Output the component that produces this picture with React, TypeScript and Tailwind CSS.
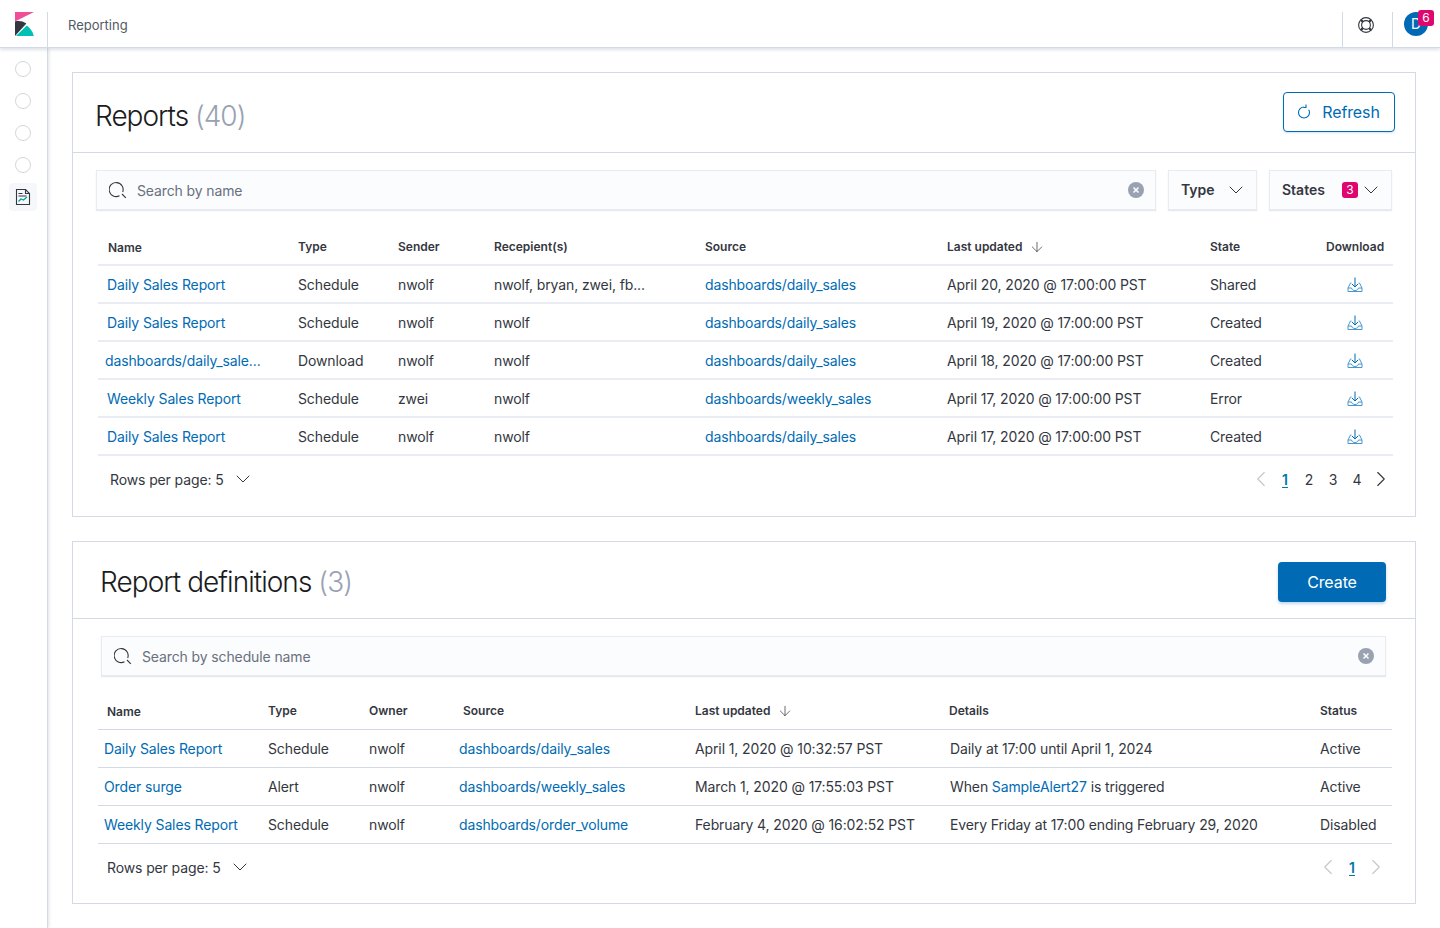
import { ChevronDown, ChevronLeft, ChevronRight, ArrowDown } from "lucide-react";
import type { ReactNode } from "react";

const link = "text-[#006bb4]";
const text = "text-[#343741]";

const reports = [
  ["Daily Sales Report", "Schedule", "nwolf", "nwolf, bryan, zwei, fb...", "dashboards/daily_sales", "April 20, 2020 @ 17:00:00 PST", "Shared"],
  ["Daily Sales Report", "Schedule", "nwolf", "nwolf", "dashboards/daily_sales", "April 19, 2020 @ 17:00:00 PST", "Created"],
  ["dashboards/daily_sale...", "Download", "nwolf", "nwolf", "dashboards/daily_sales", "April 18, 2020 @ 17:00:00 PST", "Created"],
  ["Weekly Sales Report", "Schedule", "zwei", "nwolf", "dashboards/weekly_sales", "April 17, 2020 @ 17:00:00 PST", "Error"],
  ["Daily Sales Report", "Schedule", "nwolf", "nwolf", "dashboards/daily_sales", "April 17, 2020 @ 17:00:00 PST", "Created"],
];

const definitions = [
  ["Daily Sales Report", "Schedule", "nwolf", "dashboards/daily_sales", "April 1, 2020 @ 10:32:57 PST", "Daily at 17:00 until April 1, 2024", "Active"],
  ["Order surge", "Alert", "nwolf", "dashboards/weekly_sales", "March 1, 2020 @ 17:55:03 PST", "", "Active"],
  ["Weekly Sales Report", "Schedule", "nwolf", "dashboards/order_volume", "February 4, 2020 @ 16:02:52 PST", "Every Friday at 17:00 ending February 29, 2020", "Disabled"],
];

function Logo() {
  return (
    <svg width="19" height="24" viewBox="0 0 19 24">
      <path d="M0 0h19L0 9.500z" fill="#f04e98" />
      <path d="M0 9.500 C4 8.500 8 9.300 11.400 11.500 L0 24z" fill="#343741" />
      <path d="M1 24 L11.800 13.500 C15 15.800 17.800 19.500 18.800 24z" fill="#00bfb3" />
    </svg>
  );
}

function ReportIcon() {
  return (
    <svg width="16" height="16" viewBox="0 0 16 16" fill="none" stroke="#343741" strokeWidth="1.100">
      <path d="M1.500.5h9l4 4v11h-13z" />
      <path d="M10.500.5v4h4" />
      <path d="M3.500 4.500h4M3.500 7h8" />
      <path d="M3.500 12.500l2.500-2.500 2.500 1 3.500-3" stroke="#00a69b" strokeWidth="1.300" />
    </svg>
  );
}

function HelpIcon() {
  return (
    <svg width="16" height="16" viewBox="0 0 16 16" fill="none" stroke="#343741" strokeWidth="1.100">
      <circle cx="8" cy="8" r="7.400" />
      <circle cx="8" cy="8" r="4.400" />
      <path d="M2.800 2.800l2.100 2.100M13.200 2.800l-2.100 2.100M2.800 13.200l2.100-2.100M13.200 13.200l-2.100-2.100" strokeWidth="2.200" />
    </svg>
  );
}

function DownloadIcon() {
  return (
    <svg className="mt-[1px]" width="16" height="16" viewBox="0 0 16 16" fill="none" stroke="#006bb4" strokeWidth="1">
      <path d="M4.500 6H3.500L1 11v3.500h14V11l-2.500-5h-1" stroke="#4a97cc" />
      <path d="M1 11h3.500c.4 1.700 1.700 2.500 3.500 2.500s3.100-.8 3.500-2.500H15" stroke="#4a97cc" />
      <path d="M8 .5V10M5 7l3 3 3-3" />
    </svg>
  );
}

function RefreshIcon() {
  return (
    <svg width="16" height="16" viewBox="0 0 16 16" fill="none" stroke="currentColor" strokeWidth="1.100">
      <path d="M8 3a5.500 5.500 0 1 0 5.500 5.500c0-1-.3-2-.8-2.800" />
      <path d="M10 .5V3.500H7.500" />
    </svg>
  );
}

function SearchIcon() {
  return (
    <svg width="18" height="18" viewBox="0 0 18 18" fill="none" stroke="#343741" strokeWidth="1.100">
      <path d="M13.700 11A7 7 0 1 0 10.500 14.700" />
      <path d="M13 13l3.800 3.800" />
    </svg>
  );
}

function ClearIcon() {
  return (
    <span className="flex h-4 w-4 items-center justify-center rounded-full bg-[#98a2b3]">
      <svg width="8" height="8" viewBox="0 0 8 8" stroke="#fff" strokeWidth="1.500">
        <path d="M1.500 1.500l5 5M6.500 1.500l-5 5" />
      </svg>
    </span>
  );
}

function SearchBox({ placeholder, className }: { placeholder: string; className: string }) {
  return (
    <div className={`flex h-10 items-center bg-[#fbfcfd] border border-[#e8ebf1] shadow-[0_1px_1px_rgba(152,162,179,0.25)] ${className}`}>
      <span className="ml-3 mr-[10px] flex"><SearchIcon /></span>
      <span className="flex-1 text-[14px] tracking-[-0.12px] text-[#69707d]">{placeholder}</span>
      <span className="mr-[11px]"><ClearIcon /></span>
    </div>
  );
}

function FilterButton({ label, badge, className }: { label: string; badge?: string; className: string }) {
  return (
    <div className={`flex h-10 items-center bg-[#fbfcfd] border border-[#e8ebf1] shadow-[0_1px_1px_rgba(152,162,179,0.25)] pl-3 ${className}`}>
      <span className="flex-1 pb-[1px] text-[14px] font-semibold text-[#343741]">{label}</span>
      {badge && (
        <span className="mr-[1px] flex h-4 w-4 items-center justify-center rounded-[3px] bg-[#e0066f] text-[12px] text-white">{badge}</span>
      )}
      <ChevronDown className="mr-[8px] h-6 w-6 text-[#343741]" strokeWidth={1} />
    </div>
  );
}

function Head({ className, children }: { className: string; children: ReactNode }) {
  return <div className={`shrink-0 text-[12px] font-semibold text-[#343741] ${className}`}>{children}</div>;
}

function Cell({ className, children }: { className: string; children: ReactNode }) {
  return <div className={`shrink-0 text-[14px] tracking-[-0.12px] ${className}`}>{children}</div>;
}

function Pager({ pages, nextOff }: { pages: string[]; nextOff?: boolean }) {
  return (
    <div className="flex items-center text-[14px] text-[#343741]">
      <ChevronLeft className="-mr-[1px] h-[26px] w-[26px] text-[#c2c6ce]" strokeWidth={1} />
      {pages.map((p, i) => (
        <span key={p} className={`w-6 text-center ${i === 0 ? "font-semibold text-[#0079a5] underline underline-offset-2" : ""}`}>{p}</span>
      ))}
      <ChevronRight className={`-ml-[1px] h-[26px] w-[26px] ${nextOff ? "text-[#c2c6ce]" : "text-[#343741]"}`} strokeWidth={1} />
    </div>
  );
}

function RowsPerPage() {
  return (
    <div className="flex items-center text-[14px] tracking-[-0.12px] text-[#343741]">
      Rows per page: 5
      <ChevronDown className="ml-[7px] h-6 w-6" strokeWidth={1} />
    </div>
  );
}

export default function App() {
  return (
    <div className="flex h-[928px] flex-col overflow-hidden bg-white font-['Inter',sans-serif]">
      <header className="z-10 flex h-[48px] shrink-0 items-stretch border-b border-[#d3dae6] bg-white shadow-[0_2px_3px_rgba(152,162,179,0.3)]">
        <div className="flex w-[47px] items-center pl-[15px] pt-[1px]"><Logo /></div>
        <div className="mt-3 w-px bg-[#d3dae6]" />
        <div className="flex flex-1 items-center pl-[20px] pt-[5px] text-[13px] text-[#535966]">Reporting</div>
        <div className="mt-3 w-px bg-[#d3dae6]" />
        <div className="flex w-[49px] items-center justify-center pr-[3px] pt-[2px]"><HelpIcon /></div>
        <div className="mt-3 w-px bg-[#d3dae6]" />
        <div className="relative flex w-[47px] items-center pl-[11px]">
          <span className="flex h-6 w-6 items-center justify-center rounded-full bg-[#006bb4] text-[14px] text-white">D</span>
          <span className="absolute left-[25px] top-[10px] flex h-[16px] w-[16px] items-center justify-center rounded-[3px] bg-[#e0066f] text-[12px] text-white">6</span>
        </div>
      </header>
      <div className="flex flex-1">
        <aside className="flex w-[48px] shrink-0 flex-col items-center border-r border-[#d3dae6] pt-[13px] pr-[2px] shadow-[1px_0_3px_rgba(152,162,179,0.3)]">
          {[0, 1, 2, 3].map((i) => (
            <span key={i} className="mb-4 h-4 w-4 rounded-full border border-[#d3d6db]" />
          ))}
          <div className="-mt-[6px] flex h-7 w-7 items-center justify-center rounded-[4px] bg-[#f5f7fa]"><ReportIcon /></div>
        </aside>
        <main className="flex-1 pl-[24px] pr-[24px] pt-[24px]">
          <section className="h-[445px] border border-[#d3dae6]">
            <div className="flex h-[80px] items-start justify-between border-b border-[#d3dae6] pl-[22px] pr-[20px]">
              <h1 className="mt-[25px] text-[28px] leading-[36px] font-light tracking-[-1px] text-[#1a1c21]">
                Reports <span className="text-[#98a2b3]">(40)</span>
              </h1>
              <div className="mt-[19px] flex h-10 w-[112px] items-center justify-center gap-[10px] rounded-[4px] border border-[#006bb4] pr-[2px] text-[16px] tracking-[-0.1px] text-[#006bb4] shadow-[0_1px_2px_rgba(0,107,180,0.2)]">
                <RefreshIcon />
                Refresh
              </div>
            </div>
            <div className="mt-[17px] ml-[23px] flex gap-3 pr-[23px]">
              <SearchBox placeholder="Search by name" className="w-[1060px]" />
              <FilterButton label="Type" className="w-[89px]" />
              <FilterButton label="States" badge="3" className="w-[123px]" />
            </div>
            <div className="ml-[25px] mt-[18px] w-[1295px]">
              <div className="flex h-[38px] items-center border-b-2 border-[#e9edf3] pt-[1px]">
                <Head className="w-[200px] pl-[10px] pt-[2px]">Name</Head>
                <Head className="w-[100px]">Type</Head>
                <Head className="w-[96px]">Sender</Head>
                <Head className="w-[211px]">Recepient(s)</Head>
                <Head className="w-[242px]">Source</Head>
                <Head className="flex w-[263px] items-center gap-[7px]">Last updated <ArrowDown className="h-4 w-4" strokeWidth={1.100} /></Head>
                <Head className="w-[116px]">State</Head>
                <Head>Download</Head>
              </div>
              {reports.map((r, i) => (
                <div key={i} className="flex h-[38px] items-center border-b-2 border-[#e9edf3] text-[#343741]">
                  <Cell className={`w-[200px] ${link} ${r[0].startsWith("dash") ? "pl-[7px]" : "pl-[9px]"}`}>{r[0]}</Cell>
                  <Cell className={`w-[100px] ${text}`}>{r[1]}</Cell>
                  <Cell className={`w-[96px] ${text}`}>{r[2]}</Cell>
                  <Cell className={`w-[211px] ${text}`}>{r[3]}</Cell>
                  <Cell className={`w-[242px] ${link}`}>{r[4]}</Cell>
                  <Cell className={`w-[263px] ${text}`}>{r[5]}</Cell>
                  <Cell className={`w-[137px] ${text}`}>{r[6]}</Cell>
                  <DownloadIcon />
                </div>
              ))}
            </div>
            <div className="ml-[37px] mt-[10px] flex w-[1284px] items-center justify-between">
              <RowsPerPage />
              <Pager pages={["1", "2", "3", "4"]} />
            </div>
          </section>
          <section className="mt-[24px] h-[363px] border border-[#d3dae6]">
            <div className="flex h-[77px] items-start justify-between border-b border-[#d3dae6] pl-[27px] pr-[29px]">
              <h2 className="mt-[22px] text-[28px] leading-[36px] font-light tracking-[-0.95px] text-[#1a1c21]">
                Report definitions <span className="text-[#98a2b3]">(3)</span>
              </h2>
              <div className="mt-[20px] flex h-10 w-[108px] items-center justify-center rounded-[4px] bg-[#006bb4] text-[16px] tracking-[-0.1px] text-white shadow-[0_2px_3px_rgba(0,107,180,0.25)]">Create</div>
            </div>
            <SearchBox placeholder="Search by schedule name" className="ml-[28px] mt-[17px] w-[1285px]" />
            <div className="ml-[25px] mt-[16px] w-[1294px]">
              <div className="flex h-[38px] items-center border-b border-[#d3dae6] pt-[1px]">
                <Head className="w-[170px] pl-[9px] pt-[1px]">Name</Head>
                <Head className="w-[101px]">Type</Head>
                <Head className="w-[94px]">Owner</Head>
                <Head className="w-[232px]">Source</Head>
                <Head className="flex w-[254px] items-center gap-[7px]">Last updated <ArrowDown className="h-4 w-4" strokeWidth={1.100} /></Head>
                <Head className="w-[371px]">Details</Head>
                <Head>Status</Head>
              </div>
              {definitions.map((d, i) => (
                <div key={i} className="flex h-[38px] items-center border-b border-[#d3dae6]">
                  <Cell className={`w-[170px] pl-[6px] ${link}`}>{d[0]}</Cell>
                  <Cell className={`w-[101px] ${text}`}>{d[1]}</Cell>
                  <Cell className={`w-[90px] ${text}`}>{d[2]}</Cell>
                  <Cell className={`w-[236px] ${link}`}>{d[3]}</Cell>
                  <Cell className={`w-[255px] ${text}`}>{d[4]}</Cell>
                  <Cell className={`w-[370px] ${text}`}>
                    {d[5] || <>When <span className={link}>SampleAlert27</span> is triggered</>}
                  </Cell>
                  <Cell className={text}>{d[6]}</Cell>
                </div>
              ))}
            </div>
            <div className="ml-[34px] mt-[10px] flex w-[1282px] items-center justify-between">
              <RowsPerPage />
              <Pager pages={["1"]} nextOff />
            </div>
          </section>
        </main>
      </div>
    </div>
  );
}
